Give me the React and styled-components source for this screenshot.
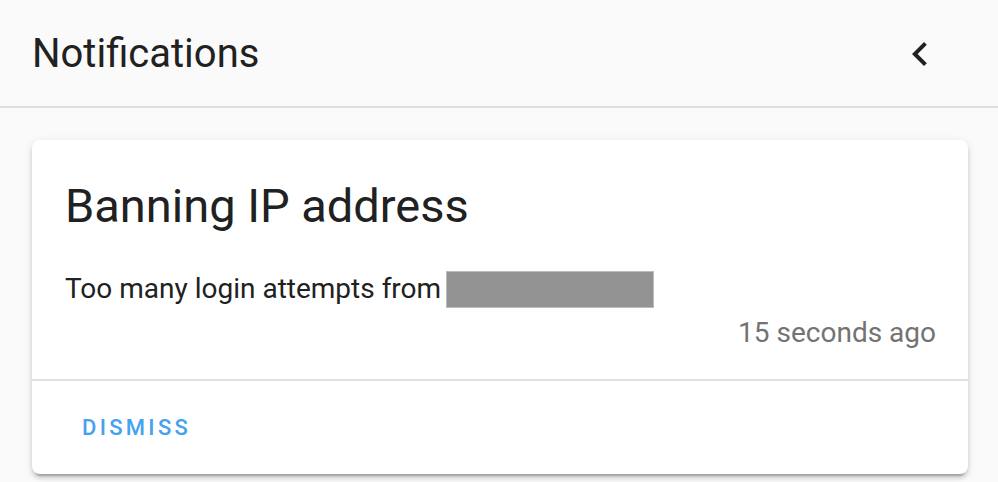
import React from "react";
import styled, { createGlobalStyle } from "styled-components";

const Global = createGlobalStyle`
  html, body { margin: 0; padding: 0; background: #fafafa; }
  body { font-family: Roboto, "Noto Sans", "Liberation Sans", sans-serif; }
`;

const Drawer = styled.div`
  width: 998px;
  height: 482px;
  background: #fafafa;
  overflow: hidden;
  display: flex;
  flex-direction: column;
`;

const Header = styled.header`
  height: 106px;
  display: flex;
  align-items: center;
  justify-content: space-between;
  padding: 0 54px 0 32px;
  border-bottom: 2px solid #dedede;
  flex-shrink: 0;
`;

const Title = styled.h1`
  margin: 0;
  font-size: 40px;
  font-weight: 400;
  color: #212121;
  line-height: 48px;
  margin-top: 2px;
`;

const IconButton = styled.button`
  width: 48px;
  height: 48px;
  padding: 0;
  border: none;
  background: transparent;
  display: flex;
  align-items: center;
  justify-content: center;
  margin-top: 2px;
`;

const Content = styled.div`
  padding: 32px 30px 0 32px;
`;

const Card = styled.div`
  background: #fff;
  border-radius: 8px;
  box-shadow: 0 4px 4px 0 rgba(0,0,0,0.14), 0 2px 10px 0 rgba(0,0,0,0.10), 0 6px 2px -4px rgba(0,0,0,0.2);
  display: flex;
  flex-direction: column;
`;

const CardBody = styled.div`
  padding: 34px 32px 26px 33px;
`;

const CardTitle = styled.div`
  font-size: 47px;
  line-height: 64px;
  color: #212121;
  font-weight: 400;
`;

const Message = styled.div`
  margin-top: 31px;
  display: flex;
  align-items: flex-end;
  font-size: 28px;
  line-height: 40px;
  color: #212121;
`;

const Redacted = styled.span`
  display: inline-block;
  width: 206px;
  height: 35px;
  margin-left: 5px;
  margin-bottom: 1px;
  background: #939393;
  border: 1px solid #bcbcbc;
`;

const Time = styled.div`
  margin-top: 4px;
  text-align: right;
  font-size: 28px;
  line-height: 40px;
  color: #737373;
`;

const Actions = styled.div`
  border-top: 2px solid #e0e0e0;
  height: 93px;
  display: flex;
  align-items: center;
  padding-left: 50px;
`;

const TextButton = styled.button`
  border: none;
  background: transparent;
  padding: 0;
  font-family: Roboto, "Liberation Sans", sans-serif;
  font-weight: 500;
  font-size: 22px;
  letter-spacing: 3.3px;
  color: #45a2ee;
  margin-top: 0;
`;

export default function App() {
  return (
    <>
      <Global />
      <Drawer>
        <Header>
          <Title>Notifications</Title>
          <IconButton aria-label="Close">
            <svg width="48" height="48" viewBox="0 0 24 24">
              <path fill="#212121" d="M15.41,16.58L10.83,12L15.41,7.41L14,6L8,12L14,18L15.41,16.58Z" />
            </svg>
          </IconButton>
        </Header>
        <Content>
          <Card>
            <CardBody>
              <CardTitle>Banning IP address</CardTitle>
              <Message>
                Too many login attempts from
                <Redacted />
              </Message>
              <Time>15 seconds ago</Time>
            </CardBody>
            <Actions>
              <TextButton>DISMISS</TextButton>
            </Actions>
          </Card>
        </Content>
      </Drawer>
    </>
  );
}
